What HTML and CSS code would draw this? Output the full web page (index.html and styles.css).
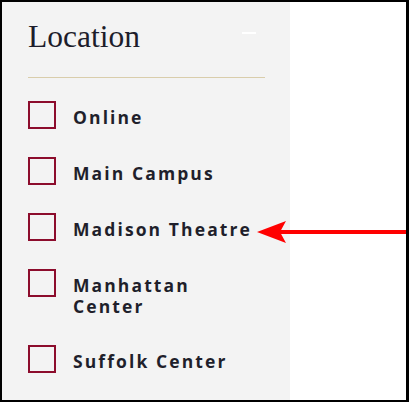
FILE: index.html
```html
<!DOCTYPE html>
<html>
<head>
    <title>Location Filter</title>
    <link rel="stylesheet" href="styles.css">
</head>
<body>
    <div class="frame">
        <div class="panel">
            <div class="head">
                <h2 class="title">Location</h2>
                <span class="minus"></span>
            </div>
            <div class="divider"></div>
            <ul class="options">
                <li class="option"><span class="box"></span><span class="label">Online</span></li>
                <li class="option"><span class="box"></span><span class="label">Main Campus</span></li>
                <li class="option"><span class="box"></span><span class="label">Madison Theatre</span></li>
                <li class="option"><span class="box"></span><span class="label">Manhattan Center</span></li>
                <li class="option"><span class="box"></span><span class="label">Suffolk Center</span></li>
            </ul>
        </div>

        <!-- annotation arrow -->
        <svg class="arrow" width="152" height="26" viewBox="0 0 152 26">
            <line x1="20" y1="12" x2="152" y2="12" stroke="#ff0000" stroke-width="4"/>
            <polygon points="0,12 29,1 23,12 29,23" fill="#ff0000"/>
        </svg>
    </div>
</body>
</html>
```

FILE: styles.css
```css
html, body {
    margin: 0;
    padding: 0;
    background: #fff;
}
.frame {
    position: relative;
    width: 409px;
    height: 402px;
    box-sizing: border-box;
    border: 2px solid #000;
    border-right-width: 3px;
    display: flex;
    overflow: hidden;
}
.panel {
    width: 288px;
    flex-shrink: 0;
    background-color: #f3f3f3;
    box-sizing: border-box;
    padding: 17px 25px 0 26px;
}
.head {
    display: flex;
    justify-content: space-between;
    align-items: flex-start;
}
.title {
    margin: 0;
    font-family: "Liberation Serif", serif;
    font-weight: normal;
    font-size: 31.5px;
    line-height: 36px;
    color: #1d1d2b;
}
.minus {
    width: 14px;
    height: 2px;
    background: #fff;
    margin: 13px 9px 0 0;
}
.divider {
    height: 1px;
    background-color: #d9cdab;
    margin-top: 22px;
}
.options {
    list-style: none;
    margin: 23px 0 0 0;
    padding: 0 10px 0 0;
    display: flex;
    flex-direction: column;
    gap: 28px;
}
.option {
    display: flex;
    align-items: flex-start;
    gap: 17px;
}
.box {
    width: 28px;
    height: 28px;
    flex-shrink: 0;
    box-sizing: border-box;
    border: 2px solid #8c0c2c;
}
.label {
    padding-top: 6px;
    font-family: "Open Sans", sans-serif;
    font-weight: bold;
    font-size: 17.5px;
    line-height: 21px;
    letter-spacing: 2.1px;
    color: #1f1f2b;
}
.arrow {
    position: absolute;
    left: 255px;
    top: 218px;
}
```
